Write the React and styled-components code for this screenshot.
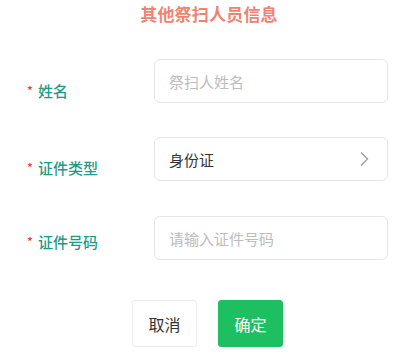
import React, { useState } from 'react';
import styled, { createGlobalStyle } from 'styled-components';

const GlobalStyle = createGlobalStyle`
    body {
        margin: 0;
        background: #fff;
        font-family: "Noto Sans CJK SC", "Noto Sans", sans-serif;
    }
`;

const Page = styled.div`
    width: 418px;
    height: 356px;
    display: flex;
    flex-direction: column;
    align-items: center;
    padding-top: 4px;
    box-sizing: border-box;
`;

const Title = styled.h2`
    margin: 0;
    font-size: 17px;
    line-height: 20px;
    font-weight: 600;
    color: #ef8372;
    letter-spacing: 0.2px;
`;

const Form = styled.div`
    width: 100%;
    display: flex;
    flex-direction: column;
    gap: 34px;
    margin-top: 35px;
`;

const Row = styled.div`
    display: grid;
    grid-template-columns: 127px 234px;
    padding-left: 27px;
    height: 44px;
    margin-top: ${p => p.shift || 0}px;
`;

const Label = styled.div`
    display: flex;
    align-items: flex-start;
    margin-top: ${p => p.offset}px;
    height: 20px;
    font-size: 15px;
    line-height: 20px;
    font-weight: 500;
    color: #1f9a89;
`;

const Star = styled.span`
    color: #e53935;
    font-size: 12px;
    line-height: 14px;
    width: 11px;
    margin-top: 2px;
`;

const Input = styled.input`
    box-sizing: border-box;
    width: 234px;
    height: 44px;
    border: 1px solid #e6e6e6;
    border-radius: 6px;
    padding: 0 14px;
    font-family: inherit;
    font-size: 15px;
    color: #333;
    outline: none;
    &::placeholder {
        color: #bcbcbc;
    }
`;

const Select = styled.div`
    box-sizing: border-box;
    width: 234px;
    height: 44px;
    border: 1px solid #e6e6e6;
    border-radius: 6px;
    padding: 0 18px 0 14px;
    display: flex;
    align-items: center;
    justify-content: space-between;
    font-size: 15px;
    color: #333;
`;

const Actions = styled.div`
    display: flex;
    gap: 21px;
    margin-top: 40px;
    margin-left: -3px;
`;

const Button = styled.button`
    width: 65px;
    height: 47px;
    border-radius: 3px;
    font-family: inherit;
    font-size: 16px;
    border: 1px solid ${p => (p.primary ? '#1dbf60' : '#ececec')};
    background: ${p => (p.primary ? '#1dbf60' : '#fff')};
    color: ${p => (p.primary ? '#fff' : '#333')};
    padding: 0;
`;

const Chevron = () => (
    <svg width="10" height="16" viewBox="0 0 10 16">
        <polyline points="2,1.5 8.5,8 2,14.5" fill="none" stroke="#9a9a9a" strokeWidth="1.3" />
    </svg>
);

const App = () => {
    const [name, setName] = useState('');
    const [idNo, setIdNo] = useState('');

    return (
        <>
            <GlobalStyle />
            <Page>
                <Title>其他祭扫人员信息</Title>
                <Form>
                    <Row>
                        <Label offset={22}><Star>*</Star>姓名</Label>
                        <Input placeholder="祭扫人姓名" value={name} onChange={e => setName(e.target.value)} />
                    </Row>
                    <Row>
                        <Label offset={21}><Star>*</Star>证件类型</Label>
                        <Select>
                            <span>身份证</span>
                            <Chevron />
                        </Select>
                    </Row>
                    <Row shift={1}>
                        <Label offset={16}><Star>*</Star>证件号码</Label>
                        <Input placeholder="请输入证件号码" value={idNo} onChange={e => setIdNo(e.target.value)} />
                    </Row>
                </Form>
                <Actions>
                    <Button>取消</Button>
                    <Button primary>确定</Button>
                </Actions>
            </Page>
        </>
    );
};

export default App;
